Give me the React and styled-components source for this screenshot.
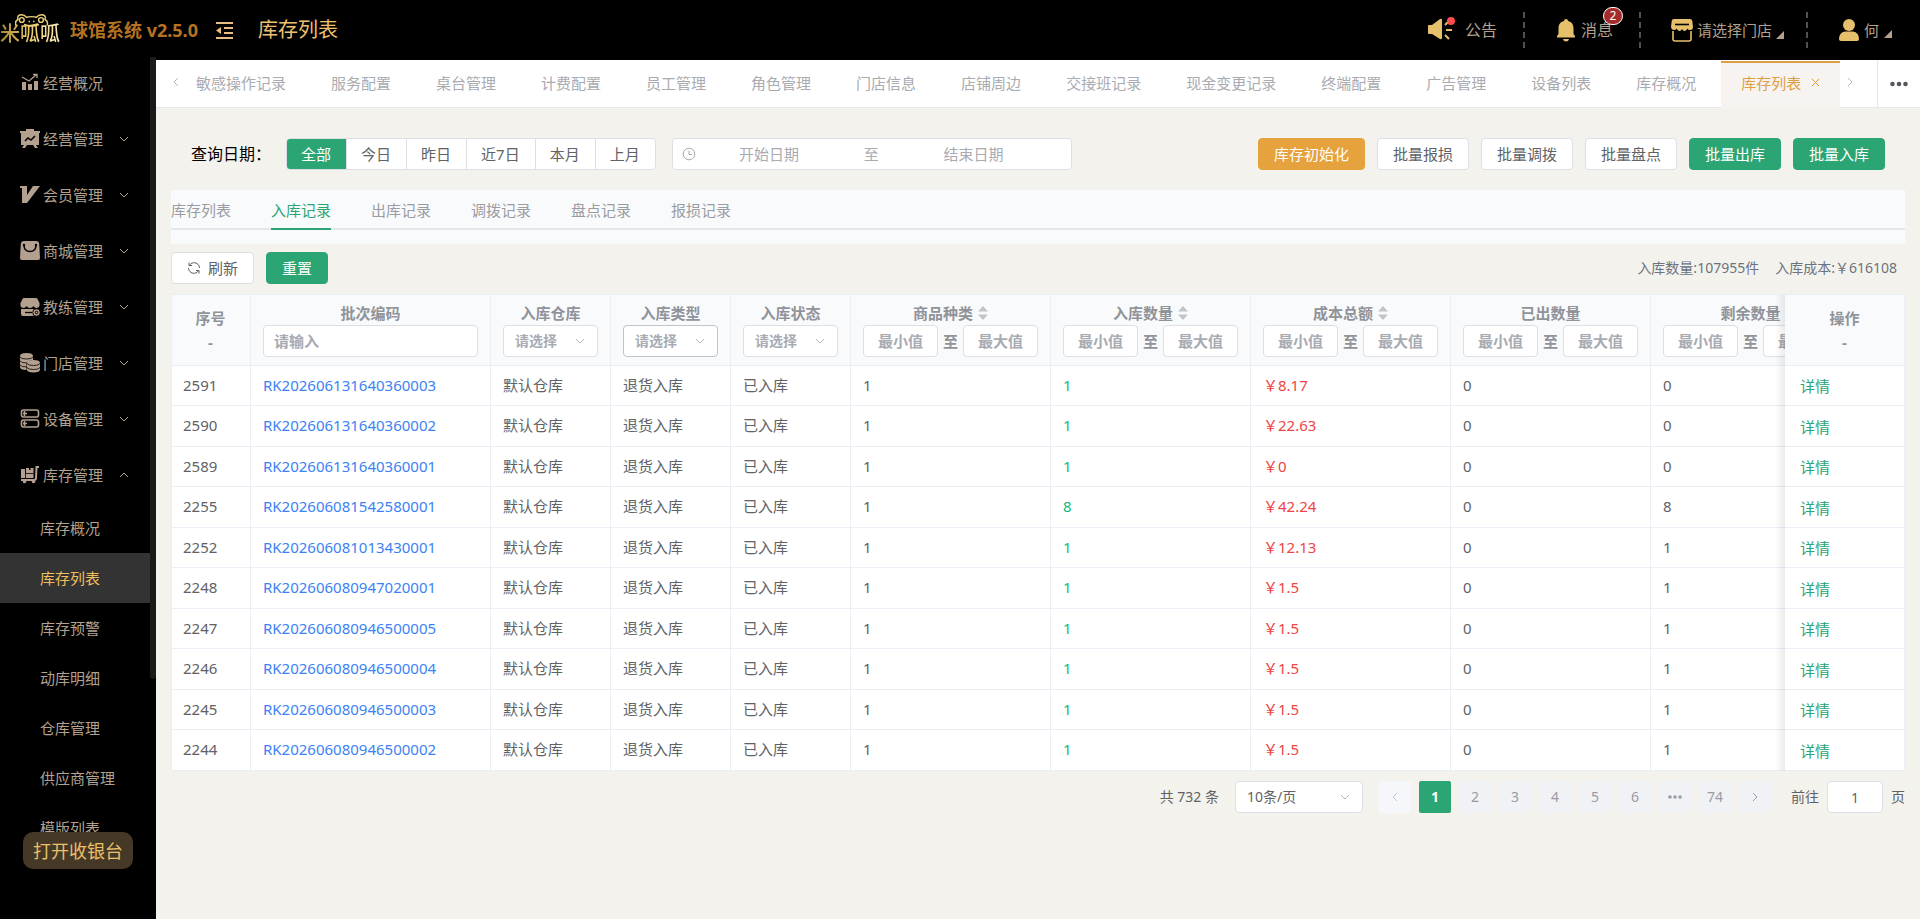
import React from "react";
import styled, { createGlobalStyle, css } from "styled-components";

const GREEN = "#2ba574";
const LINE = "#ebeef5";
const FIELD = "#dcdfe6";
const TAN = "#b3a08e";
const GOLD = "#e6c06a";

const GlobalStyle = createGlobalStyle`
  *, *::before, *::after { box-sizing: border-box; }
  body {
    margin: 0;
    background: #f4f2ed;
    color: #606266;
    font-family: "Noto Sans", "Noto Sans CJK SC", sans-serif;
    font-size: 15px;
    line-height: 20px;
  }
  button, input, select { font: inherit; color: inherit; }
  button { cursor: pointer; }
  ul { list-style: none; margin: 0; padding: 0; }
  a { color: inherit; text-decoration: none; }
  svg { display: block; flex: none; }
`;

/* ---------- frame ---------- */

const Shell = styled.div`
  display: flex;
  flex-direction: column;
  height: 100vh;
  background: #000;
  overflow: hidden;
`;

const Header = styled.header`
  flex: none;
  display: flex;
  align-items: center;
  height: 55px;
  padding: 5px 28px 0 0;
  color: ${TAN};
`;

const Body = styled.div`
  flex: 1;
  min-height: 0;
  display: flex;
`;

const Main = styled.main`
  flex: 1;
  min-width: 0;
  border-top: 5px solid #000;
  background: #f4f2ed;
  overflow: hidden;
`;

/* ---------- header ---------- */

const Logo = styled.div`
  position: relative;
  width: 62px;
  height: 32px;
  padding-top: 9px;
  font-size: 20px;
  font-weight: 500;
  line-height: 22px;
  white-space: nowrap;
  color: transparent;
  background: linear-gradient(90deg, #a98a35, #e9c964 45%, #fff0c4);
  background-clip: text;
  -webkit-background-clip: text;
`;

const FrogHead = styled.svg`
  position: absolute;
  left: 15px;
  top: 0;
`;

const Product = styled.strong`
  width: 146px;
  padding-left: 8px;
  font-size: 18px;
  line-height: 24px;
  white-space: nowrap;
  color: #b57222;
`;

const FoldButton = styled.button`
  padding: 0;
  border: 0;
  background: none;
  margin-left: 8px;
`;

const PageTitle = styled.h1`
  margin: 0 auto 0 25px;
  font-size: 20px;
  font-weight: 400;
  line-height: 28px;
  color: #f0c070;
`;

const HeaderItem = styled.button`
  position: relative;
  display: flex;
  align-items: center;
  gap: ${(p) => p.$gap || 6}px;
  padding: 0;
  border: 0;
  background: none;
  font-size: ${(p) => p.$size || 15}px;
  line-height: 22px;
  white-space: nowrap;
`;

const HeaderRule = styled.span`
  height: 36px;
  margin: 0 ${(p) => p.$right}px 0 ${(p) => p.$left}px;
  border-left: 2px dashed #57504a;
`;

const Badge = styled.span`
  position: absolute;
  right: -10px;
  top: -12px;
  min-width: 20px;
  height: 18px;
  border: 1px solid #fff;
  border-radius: 9px;
  background: #a52a2a;
  color: #fff;
  font-size: 12px;
  line-height: 16px;
  text-align: center;
`;

const Corner = styled.span`
  align-self: flex-end;
  margin-bottom: 3px;
  border-left: 8px solid transparent;
  border-bottom: 8px solid ${TAN};
`;

/* ---------- sidebar ---------- */

const Sidebar = styled.nav`
  position: relative;
  flex: none;
  width: 156px;
  overflow: hidden;
  color: ${TAN};
`;

const ScrollThumb = styled.span`
  position: absolute;
  right: 0;
  top: 2px;
  width: 6px;
  height: 72%;
  border-radius: 0 0 3px 3px;
  background: #1a1a1a;
`;

const MenuItem = styled.a`
  display: flex;
  align-items: center;
  height: 56px;
  padding-left: 20px;
  gap: 3px;
  white-space: nowrap;
`;

const MenuText = styled.span`
  width: 73px;
`;

const SubItem = styled.a`
  display: block;
  width: 150px;
  padding-left: 40px;
  line-height: 50px;
  ${(p) =>
    p.$active &&
    css`
      background: #333;
      color: #f0bf5e;
    `}
`;

const CashierButton = styled.button`
  position: absolute;
  left: 23px;
  bottom: 50px;
  width: 110px;
  height: 37px;
  padding: 0;
  border: 0;
  border-radius: 10px;
  background: #463826;
  color: #e8c06a;
  font-size: 18px;
`;

/* ---------- opened pages ---------- */

const PageTabs = styled.div`
  display: flex;
  height: 48px;
  background: #fff;
  border-bottom: 1px solid #e4e7ed;
`;

const TabArrow = styled.button`
  flex: none;
  display: flex;
  justify-content: center;
  align-items: center;
  width: ${(p) => p.$width}px;
  padding: 0 0 4px;
  border: 0;
  background: none;
  color: #b4b7bd;
`;

const TabStrip = styled.div`
  flex: 0 1 auto;
  min-width: 0;
  display: flex;
  height: 48px;
  overflow: hidden;
`;

const PageTab = styled.a`
  flex: none;
  display: flex;
  align-items: center;
  gap: 10px;
  height: 48px;
  padding: 0 25px 2px 20px;
  color: #a9abb0;
  white-space: nowrap;
  &:first-child { padding-left: 0; }
  ${(p) =>
    p.$active &&
    css`
      margin-top: 1px;
      padding: 0 20px 7px;
      border-top: 2px solid #dd9f45;
      background: #f7f3f1;
      color: #dd9f45;
    `}
`;

const MoreButton = styled.button`
  flex: none;
  display: flex;
  align-items: center;
  justify-content: center;
  width: 43px;
  margin-left: auto;
  padding: 0;
  border: 0;
  border-left: 1px solid #e4e7ed;
  background: none;
`;

/* ---------- content ---------- */

const Content = styled.div`
  padding: 30px 15px 0;
`;

const FilterBar = styled.div`
  display: flex;
  align-items: center;
  margin-bottom: 20px;
  padding: 0 20px;
`;

const FilterLabel = styled.span`
  width: 95px;
  font-size: 16px;
  color: #000;
  white-space: nowrap;
`;

const Segments = styled.div`
  display: flex;
  border: 1px solid ${FIELD};
  border-radius: 4px;
  background: #fff;
  overflow: hidden;
`;

const Segment = styled.label`
  display: flex;
  align-items: center;
  height: 30px;
  padding: 0 15px 0 14px;
  white-space: nowrap;
  cursor: pointer;
  & + & { border-left: 1px solid ${FIELD}; }
  &:has(input:checked) { background: ${GREEN}; color: #fff; }
  input { appearance: none; width: 0; margin: 0; }
`;

const DateRange = styled.div`
  display: flex;
  align-items: center;
  width: 400px;
  height: 32px;
  margin-left: 16px;
  padding: 0 24px 0 9px;
  border: 1px solid ${FIELD};
  border-radius: 4px;
  background: #fff;
  color: #a8abb2;
`;

const DateInput = styled.input`
  flex: 1;
  min-width: 0;
  padding: 0;
  border: 0;
  outline: 0;
  background: none;
  text-align: center;
  &::placeholder { color: #a8abb2; opacity: 1; }
`;

const RangeWord = styled.span`
  width: ${(p) => p.$width}px;
  text-align: center;
`;

const Actions = styled.div`
  display: flex;
  gap: 12px;
  margin-left: auto;
`;

const tones = {
  plain: ["#fff", FIELD, "#606266"],
  green: [GREEN, GREEN, "#fff"],
  orange: ["#e6a23c", "#e6a23c", "#fff"],
};

const Button = styled.button`
  display: flex;
  align-items: center;
  gap: 7px;
  height: 32px;
  padding: 0 15px;
  border: 1px solid ${(p) => tones[p.$tone || "plain"][1]};
  border-radius: 4px;
  background: ${(p) => tones[p.$tone || "plain"][0]};
  color: ${(p) => tones[p.$tone || "plain"][2]};
  white-space: nowrap;
`;

const RecordPanel = styled.div`
  height: 54px;
  margin-bottom: 8px;
  background: #f9fafc;
`;

const RecordTabs = styled.div`
  display: flex;
  gap: 40px;
  height: 40px;
  border-bottom: 2px solid #e4e7ed;
`;

const RecordTab = styled.a`
  height: 40px;
  line-height: 40px;
  white-space: nowrap;
  color: ${(p) => (p.$active ? GREEN : "#999ca2")};
  border-bottom: 2px solid ${(p) => (p.$active ? GREEN : "transparent")};
`;

const Toolbar = styled.div`
  display: flex;
  align-items: center;
  gap: 12px;
  margin-bottom: 10px;
`;

const Summary = styled.div`
  display: flex;
  gap: 16px;
  margin-left: auto;
  padding-right: 8px;
  font-size: 14px;
  color: #6b7280;
`;

/* ---------- table ---------- */

const TableBox = styled.div`
  overflow: hidden;
  border-top: 1px solid ${LINE};
`;

const Table = styled.table`
  width: 1800px;
  min-width: 100%;
  table-layout: fixed;
  border-collapse: separate;
  border-spacing: 0;
`;

const cell = css`
  border-right: 1px solid ${LINE};
  border-bottom: 1px solid ${LINE};
  &:first-child {
    padding-left: 11px;
    border-left: 1px solid ${LINE};
  }
`;

const pinned = css`
  position: sticky;
  right: 0;
  &::before {
    content: "";
    position: absolute;
    top: 0;
    bottom: -1px;
    left: -10px;
    width: 10px;
    background: linear-gradient(90deg, rgba(0, 0, 0, 0), rgba(0, 0, 0, 0.08));
  }
`;

const Th = styled.th`
  height: 71px;
  padding: 0 12px;
  background: #f9fafc;
  color: #909399;
  font-weight: 700;
  text-align: center;
  line-height: 24px;
  ${cell}
  ${(p) => p.$pinned && pinned}
`;

const Tr = styled.tr`
  height: 40px;
  &:nth-child(even) { height: 41px; }
`;

const Td = styled.td`
  padding: 0 12px 2px;
  background: #fff;
  color: ${(p) => p.$color || "#606266"};
  white-space: nowrap;
  ${cell}
  ${(p) =>
    p.$pinned &&
    css`
      ${pinned}
      padding: 1px 12px 0 13px;
    `}
`;

const ColumnName = styled.div`
  display: flex;
  justify-content: center;
  align-items: center;
  gap: 5px;
  height: 22px;
  line-height: 20px;
  padding-bottom: 2px;
  white-space: nowrap;
`;

const FieldRow = styled.div`
  display: flex;
  align-items: center;
`;

const Field = styled.input`
  width: ${(p) => (p.$width ? p.$width + "px" : "100%")};
  height: 32px;
  padding: 0 10px;
  border: 1px solid ${FIELD};
  border-radius: 4px;
  outline: 0;
  background: #fff;
  text-align: ${(p) => (p.$width ? "center" : "left")};
  &::placeholder { color: #a8abb2; opacity: 1; }
`;

const SelectBox = styled.span`
  position: relative;
  display: block;
  width: ${(p) => (p.$width ? p.$width + "px" : "100%")};
  svg {
    position: absolute;
    right: 13px;
    top: 11px;
    pointer-events: none;
  }
`;

const Select = styled.select`
  appearance: none;
  width: 100%;
  height: 32px;
  padding: 0 11px;
  border: 1px solid ${(p) => (p.$hover ? "#c0c4cc" : FIELD)};
  border-radius: 4px;
  background: #fff;
  color: ${(p) => p.$color || "#a8abb2"};
  font-size: 14px;
`;

const CodeLink = styled.a`
  color: #3b82f6;
`;

const DetailButton = styled.button`
  padding: 2px;
  border: 0;
  background: none;
  color: ${GREEN};
`;

/* ---------- pager ---------- */

const Pager = styled.div`
  display: flex;
  align-items: center;
  justify-content: flex-end;
  gap: 16px;
  margin-top: 10px;
  font-size: 14px;
  white-space: nowrap;
`;

const PageList = styled.div`
  display: flex;
  gap: 8px;
  margin-right: 4px;
`;

const PageButton = styled.button`
  display: flex;
  align-items: center;
  justify-content: center;
  width: 32px;
  height: 32px;
  padding: 0;
  border: 0;
  border-radius: 2px;
  background: ${(p) => (p.$active ? GREEN : "#f0f2f5")};
  color: ${(p) => (p.$active ? "#fff" : "#999ca2")};
  font-weight: ${(p) => (p.$active ? 700 : 400)};
  &:disabled { background: #f5f7fa; color: #c0c4cc; }
`;

const Jump = styled.label`
  display: flex;
  align-items: center;
  gap: 8px;
`;

/* ---------- drawings ---------- */

const Chevron = ({ dir = "down", size = 10, color = "currentColor" }) => {
  const d = {
    down: "M1 3l4 4 4-4",
    up: "M1 7l4-4 4 4",
    left: "M7 1L3 5l4 4",
    right: "M3 1l4 4-4 4",
  }[dir];
  return (
    <svg width={size} height={size} viewBox="0 0 10 10" fill="none" stroke={color} strokeWidth="1">
      <path d={d} />
    </svg>
  );
};

const Frog = () => (
  <FrogHead width="34" height="16" viewBox="0 0 34 16" fill="none" stroke="#ecd07c" strokeWidth="1.4">
    <path d="M1 11.500C0 9 1 6.500 3 5.500C2 2 4 .8 6.500 .8S10.500 2 11.500 3.200Q16.500 2 21.500 3.200C22.500 2 24 .8 26.500 .8S31 2 30 5.500C32 6.500 33 9 32 11.500" />
    <circle cx="6.800" cy="6" r="2.400" />
    <circle cx="26" cy="6" r="2.400" />
    <path d="M9 10.500Q16.500 13.500 24 10.500" />
    <path d="M13.500 7.500h1.500M18 7.500h1.500" />
  </FrogHead>
);

const FoldIcon = () => (
  <svg width="17" height="17" viewBox="0 0 17 17" fill="#e8bd84">
    <path d="M0 0h17v2H0zM8 5h9v2H8zM8 10h9v2H8zM0 15h17v2H0zM0 8.500L5 5v7z" />
  </svg>
);

const HornIcon = () => (
  <svg width="27" height="26" viewBox="0 0 27 26">
    <path fill={GOLD} d="M0 9q0-1 1-1h3l8-6q2-1 2 1v18q0 2-2 1l-8-5H1q-1 0-1-1z" />
    <path stroke={GOLD} strokeWidth="2" d="M18 13h6M17 8l4-4M17 18l4 4" />
    <circle cx="23" cy="4" r="4" fill="#ff4d4f" />
  </svg>
);

const BellIcon = () => (
  <svg width="18" height="23" viewBox="0 0 18 23" fill={GOLD}>
    <path d="M9 0a2 2 0 0 1 2 2C15 3 16.500 6 16.500 9v6L18 17v1.500H0V17l1.500-2V9C1.500 6 3 3 7 2a2 2 0 0 1 2-2zM6 20h6q-.5 2.500-3 2.500T6 20z" />
  </svg>
);

const StoreIcon = () => (
  <svg width="22" height="23" viewBox="0 0 22 23">
    <path fill={GOLD} d="M3 0h16q2 0 2.300 2L22 8q0 3-2.800 3T16.500 9.500Q15 12 13.500 12T11 10Q10 12 8.500 12T5.500 9.500Q5 11 2.800 11T0 8L.7 2Q1 0 3 0z" />
    <path stroke="#000" strokeWidth="1.600" d="M4 5.500h14" />
    <path fill="none" stroke={GOLD} strokeWidth="1.600" d="M2 12v8q0 2 2 2h14q2 0 2-2v-8" />
  </svg>
);

const UserIcon = () => (
  <svg width="20" height="22" viewBox="0 0 20 22" fill={GOLD}>
    <circle cx="10" cy="6" r="6" />
    <path d="M6 12.500h8q6 1 6 7.500 0 2-2 2H2q-2 0-2-2 0-6.500 6-7.500z" />
  </svg>
);

const ClockIcon = () => (
  <svg width="14" height="14" viewBox="0 0 14 14" fill="none" stroke="#a8abb2">
    <circle cx="7" cy="7" r="5.800" />
    <path d="M7 3.500V7.500h3" />
  </svg>
);

const RefreshIcon = () => (
  <svg width="14" height="14" viewBox="0 0 14 14" fill="none" stroke="#606266">
    <path d="M2 1.500v3h3M12 12.500v-3H9M2.300 4.500A5.500 5.500 0 0 1 11 3.300 5.500 5.500 0 0 1 12.500 7M11.700 9.500A5.500 5.500 0 0 1 3 10.700 5.500 5.500 0 0 1 1.500 7" />
  </svg>
);

const CloseIcon = () => (
  <svg width="9" height="9" viewBox="0 0 9 9" stroke="currentColor">
    <path d="M.8 .8l7.400 7.400M8.200 .8L.8 8.200" />
  </svg>
);

const DotsIcon = ({ size = 18, r = 2.3, color = "#55585e" }) => (
  <svg width={size} height="6" viewBox="0 0 18 6" fill={color}>
    <circle cx="2.500" cy="3" r={r} />
    <circle cx="9" cy="3" r={r} />
    <circle cx="15.500" cy="3" r={r} />
  </svg>
);

const SortIcon = () => (
  <svg width="10" height="14" viewBox="0 0 10 14" fill="#c0c4cc">
    <path d="M5 0l5 5.500H0zM5 14l5-5.500H0z" />
  </svg>
);

const menuDrawings = {
  chart: (
    <>
      <path d="M2 9h4v8H2zM8 11h4v6H8zM14 8h4v9h-4z" />
      <path fill="none" stroke={TAN} strokeWidth="1.300" d="M2 4l7 4 7-6M13 1.500h4v3.500" />
    </>
  ),
  board: (
    <>
      <path d="M6 0h8v2h6v2h-1v12h-3l2 3h-3l-2-3H7l-2 3H2l2-3H1V4H0V2h6z" />
      <path fill="none" stroke="#000" strokeWidth="1.500" d="M5 12l3-3 3 2 4-4" />
    </>
  ),
  vip: <path d="M0 1h7v9l6-9h7L7 18H2V3H0z" />,
  bag: (
    <>
      <path d="M4 0h12q3 0 3.200 3L20 17q0 2-2 2H2q-2 0-2-2L.8 3Q1 0 4 0z" />
      <path fill="none" stroke="#000" strokeWidth="1.500" d="M4 4q0 6.500 6 6.500T16 4" />
      <circle cx="4" cy="4" r="1.200" fill="#000" />
      <circle cx="16" cy="4" r="1.200" fill="#000" />
    </>
  ),
  coach: (
    <>
      <path d="M4 1h12q1 0 1.500 1L19.500 6v3q-1 2-3 2t-3-2q-1 2-3.500 2T6.500 9q-1 2-3 2t-3-2V6L2.500 2Q3 1 4 1z" />
      <path d="M1 12h18v7H3q-2 0-2-2z" />
      <path stroke="#000" strokeWidth="1.300" d="M5 15.500h7" />
      <circle cx="16.500" cy="15.500" r="3.800" fill={TAN} stroke="#000" />
      <circle cx="16.500" cy="15.500" r="1.300" fill={TAN} stroke="#000" />
    </>
  ),
  coins: (
    <>
      <path d="M0 3q0-3 6.500-3T13 3v4q-6 .5-6.500 4v6Q0 17 0 14z" />
      <path fill="none" stroke="#000" strokeWidth=".8" d="M0 4q1 2 6.500 2T13 4M0 8q1 2 7 2M0 12q1 2 7 2" />
      <path d="M7 10q0-3 6.500-3t6.500 3v6.500q0 3-6.500 3T7 16.500z" />
      <path fill="none" stroke="#000" strokeWidth=".8" d="M7 10.500q1 2 6.500 2t6.500-2M7 14.500q1 2 6.500 2t6.500-2" />
    </>
  ),
  racks: (
    <g fill="none" stroke={TAN} strokeWidth="1.600">
      <rect x="1.500" y="1" width="17" height="7" rx="2" />
      <rect x="1.500" y="11" width="17" height="7" rx="2" />
      <path d="M3 4.500h4M4.500 2v5M3 14.500h4M4.500 12v5" />
    </g>
  ),
  cart: (
    <>
      <path d="M1 4h4v4h1V3h3v2h1.500V3h3v10H1z" />
      <path stroke="#000" strokeWidth=".8" d="M5.500 8.500h8M5.500 8v5" />
      <path fill="none" stroke={TAN} strokeWidth="2" d="M19 2h-2.500l-.5 11q0 2-2 2H1" />
      <circle cx="4.500" cy="16.500" r="1.800" />
      <circle cx="13.500" cy="16.500" r="1.800" />
    </>
  ),
};

const MenuIcon = ({ name }) => (
  <svg width="20" height="20" viewBox="0 0 20 20" fill={TAN}>
    {menuDrawings[name]}
  </svg>
);

/* ---------- data ---------- */

const menu = [
  ["chart", "经营概况"],
  ["board", "经营管理", "down"],
  ["vip", "会员管理", "down"],
  ["bag", "商城管理", "down"],
  ["coach", "教练管理", "down"],
  ["coins", "门店管理", "down"],
  ["racks", "设备管理", "down"],
  ["cart", "库存管理", "up"],
];

const subMenu = ["库存概况", "库存列表", "库存预警", "动库明细", "仓库管理", "供应商管理", "模版列表"];

const openPages = [
  "敏感操作记录", "服务配置", "桌台管理", "计费配置", "员工管理", "角色管理", "门店信息", "店铺周边",
  "交接班记录", "现金变更记录", "终端配置", "广告管理", "设备列表", "库存概况", "库存列表",
];

const ranges = ["全部", "今日", "昨日", "近7日", "本月", "上月"];
const recordTabs = ["库存列表", "入库记录", "出库记录", "调拨记录", "盘点记录", "报损记录"];

const rows = [
  ["2591", "RK202606131640360003", "1", "8.17", "0"],
  ["2590", "RK202606131640360002", "1", "22.63", "0"],
  ["2589", "RK202606131640360001", "1", "0", "0"],
  ["2255", "RK202606081542580001", "8", "42.24", "8"],
  ["2252", "RK202606081013430001", "1", "12.13", "1"],
  ["2248", "RK202606080947020001", "1", "1.5", "1"],
  ["2247", "RK202606080946500005", "1", "1.5", "1"],
  ["2246", "RK202606080946500004", "1", "1.5", "1"],
  ["2245", "RK202606080946500003", "1", "1.5", "1"],
  ["2244", "RK202606080946500002", "1", "1.5", "1"],
];

const widths = [80, 240, 120, 120, 120, 200, 200, 200, 200, 200, 120];

/* ---------- parts ---------- */

const SelectColumn = ({ name, hover }) => (
  <Th scope="col">
    <ColumnName>{name}</ColumnName>
    <SelectBox>
      <Select aria-label={name} $hover={hover} defaultValue="">
        <option value="">请选择</option>
      </Select>
      <Chevron color="#b4b7bd" />
    </SelectBox>
  </Th>
);

const RangeColumn = ({ name, sortable }) => (
  <Th scope="col">
    <ColumnName>
      {name}
      {sortable && <SortIcon />}
    </ColumnName>
    <FieldRow>
      <Field $width={75} placeholder="最小值" aria-label={name + "最小值"} />
      <RangeWord $width={25}>至</RangeWord>
      <Field $width={75} placeholder="最大值" aria-label={name + "最大值"} />
    </FieldRow>
  </Th>
);

const TopBar = () => (
  <Header>
    <Logo>
      米呱呱
      <Frog />
    </Logo>
    <Product>球馆系统 v2.5.0</Product>
    <FoldButton aria-label="折叠菜单">
      <FoldIcon />
    </FoldButton>
    <PageTitle>库存列表</PageTitle>
    <HeaderItem $size={16} $gap={10}>
      <HornIcon />
      公告
    </HeaderItem>
    <HeaderRule $left={26} $right={32} />
    <HeaderItem $size={16}>
      <BellIcon />
      消息
      <Badge>2</Badge>
    </HeaderItem>
    <HeaderRule $left={26} $right={30} />
    <HeaderItem $gap={4}>
      <StoreIcon />
      请选择门店
      <Corner />
    </HeaderItem>
    <HeaderRule $left={22} $right={31} />
    <HeaderItem $gap={5}>
      <UserIcon />
      何
      <Corner />
    </HeaderItem>
  </Header>
);

const SideMenu = () => (
  <Sidebar>
    <ul>
      {menu.map(([icon, text, arrow]) => (
        <li key={text}>
          <MenuItem href="#">
            <MenuIcon name={icon} />
            <MenuText>{text}</MenuText>
            {arrow && <Chevron dir={arrow} />}
          </MenuItem>
        </li>
      ))}
      {subMenu.map((text) => (
        <li key={text}>
          <SubItem href="#" $active={text === "库存列表"}>
            {text}
          </SubItem>
        </li>
      ))}
    </ul>
    <ScrollThumb />
    <CashierButton>打开收银台</CashierButton>
  </Sidebar>
);

const OpenPages = () => (
  <PageTabs>
    <TabArrow $width={40} aria-label="向左">
      <Chevron dir="left" />
    </TabArrow>
    <TabStrip>
      {openPages.map((text, i) => {
        const active = i === openPages.length - 1;
        return (
          <PageTab href="#" key={text} $active={active}>
            {text}
            {active && <CloseIcon />}
          </PageTab>
        );
      })}
    </TabStrip>
    <TabArrow $width={20} aria-label="向右">
      <Chevron dir="right" />
    </TabArrow>
    <MoreButton aria-label="更多">
      <DotsIcon />
    </MoreButton>
  </PageTabs>
);

const Filters = () => (
  <FilterBar>
    <FilterLabel id="range-label">查询日期：</FilterLabel>
    <Segments role="radiogroup" aria-labelledby="range-label">
      {ranges.map((text, i) => (
        <Segment key={text}>
          <input type="radio" name="range" defaultChecked={i === 0} />
          {text}
        </Segment>
      ))}
    </Segments>
    <DateRange>
      <ClockIcon />
      <DateInput placeholder="开始日期" aria-label="开始日期" />
      <RangeWord $width={58}>至</RangeWord>
      <DateInput placeholder="结束日期" aria-label="结束日期" />
    </DateRange>
    <Actions>
      <Button $tone="orange">库存初始化</Button>
      <Button>批量报损</Button>
      <Button>批量调拨</Button>
      <Button>批量盘点</Button>
      <Button $tone="green">批量出库</Button>
      <Button $tone="green">批量入库</Button>
    </Actions>
  </FilterBar>
);

const RecordTable = () => (
  <TableBox>
    <Table>
      <colgroup>
        {widths.map((w, i) => (
          <col key={i} width={w} />
        ))}
      </colgroup>
      <thead>
        <tr>
          <Th scope="col">
            序号
            <br />-
          </Th>
          <Th scope="col">
            <ColumnName>批次编码</ColumnName>
            <FieldRow>
              <Field placeholder="请输入" aria-label="批次编码" />
            </FieldRow>
          </Th>
          <SelectColumn name="入库仓库" />
          <SelectColumn name="入库类型" hover />
          <SelectColumn name="入库状态" />
          <RangeColumn name="商品种类" sortable />
          <RangeColumn name="入库数量" sortable />
          <RangeColumn name="成本总额" sortable />
          <RangeColumn name="已出数量" />
          <RangeColumn name="剩余数量" />
          <Th scope="col" $pinned>
            操作
            <br />-
          </Th>
        </tr>
      </thead>
      <tbody>
        {rows.map(([id, code, count, cost, left]) => (
          <Tr key={id}>
            <Td>{id}</Td>
            <Td>
              <CodeLink href="#">{code}</CodeLink>
            </Td>
            <Td>默认仓库</Td>
            <Td>退货入库</Td>
            <Td>已入库</Td>
            <Td>1</Td>
            <Td $color="#10b981">{count}</Td>
            <Td $color="#ef4444">￥{cost}</Td>
            <Td>0</Td>
            <Td>{left}</Td>
            <Td $pinned>
              <DetailButton>详情</DetailButton>
            </Td>
          </Tr>
        ))}
      </tbody>
    </Table>
  </TableBox>
);

const Pagination = () => (
  <Pager>
    <span>共 732 条</span>
    <SelectBox $width={128}>
      <Select aria-label="每页条数" $color="#606266" defaultValue="10">
        <option value="10">10条/页</option>
      </Select>
      <Chevron color="#b4b7bd" />
    </SelectBox>
    <PageList>
      <PageButton disabled aria-label="上一页">
        <Chevron dir="left" />
      </PageButton>
      {[1, 2, 3, 4, 5, 6].map((n) => (
        <PageButton key={n} $active={n === 1}>
          {n}
        </PageButton>
      ))}
      <PageButton aria-label="更多页">
        <DotsIcon size={14} color="#999ca2" />
      </PageButton>
      <PageButton>74</PageButton>
      <PageButton aria-label="下一页">
        <Chevron dir="right" />
      </PageButton>
    </PageList>
    <Jump>
      前往
      <Field $width={56} defaultValue="1" />
      页
    </Jump>
  </Pager>
);

export default function App() {
  return (
    <>
      <GlobalStyle />
      <Shell>
        <TopBar />
        <Body>
          <SideMenu />
          <Main>
            <OpenPages />
            <Content>
              <Filters />
              <RecordPanel>
                <RecordTabs>
                  {recordTabs.map((text) => (
                    <RecordTab href="#" key={text} $active={text === "入库记录"}>
                      {text}
                    </RecordTab>
                  ))}
                </RecordTabs>
              </RecordPanel>
              <Toolbar>
                <Button>
                  <RefreshIcon />
                  刷新
                </Button>
                <Button $tone="green">重置</Button>
                <Summary>
                  <span>入库数量:107955件</span>
                  <span>入库成本:￥616108</span>
                </Summary>
              </Toolbar>
              <RecordTable />
              <Pagination />
            </Content>
          </Main>
        </Body>
      </Shell>
    </>
  );
}
